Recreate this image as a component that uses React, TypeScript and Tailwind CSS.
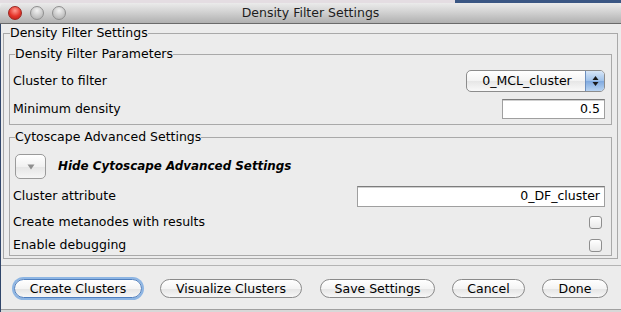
import type { FC, ReactNode } from "react";

const PillButton: FC<{ label: string; width: string; primary?: boolean }> = ({ label, width, primary }) => (
  <button
    className={`${width} h-[19px] rounded-full border text-[12.5px] leading-[17px] text-center text-black bg-[linear-gradient(#ffffff,#f4f4f4_50%,#e4e4e4_51%,#f7f7f7)] ${
      primary
        ? "border-[#4f7fbf] shadow-[0_0_0_2px_#8db5e3]"
        : "border-[#8a8a8a]"
    }`}
  >
    {label}
  </button>
);

const Checkbox: FC = () => (
  <span className="block w-[13px] h-[13px] rounded-[3px] border border-[#8e8e8e] bg-[linear-gradient(#ffffff,#e9e9e9)]" />
);

const TextBox: FC<{ value: string; width: string; height: string }> = ({ value, width, height }) => (
  <div
    className={`${width} ${height} bg-white border border-[#9f9f9f] border-t-[#7c7c7c] shadow-[inset_0_1px_0_#d0d0d0] text-right pr-[4px] flex items-center justify-end`}
  >
    {value}
  </div>
);

const Group: FC<{ title: string; className?: string; children: ReactNode }> = ({ title, className, children }) => (
  <fieldset className={`border border-[#a9a9a9] ${className ?? ""}`}>
    <legend className="leading-[16px] ml-[2px]">{title}</legend>
    {children}
  </fieldset>
);

export default function App() {
  return (
    <div className="w-[621px] h-[312px] overflow-hidden flex flex-col bg-[#ececec] text-[12.5px] text-black font-['DejaVu_Sans',sans-serif]">
      {/* desktop strip behind the window */}
      <div className="h-[3px] flex shrink-0">
        <div className="flex-1 bg-[#e4dde2]" />
        <div className="w-[166px] bg-[#3a5683]" />
      </div>

      {/* Title bar */}
      <div className="h-[21px] shrink-0 rounded-t-[5px] border-b border-[#6a6a6a] bg-[linear-gradient(#ebebeb,#d2d2d2_45%,#b0b0b0)] grid grid-cols-[1fr_auto_1fr] items-center">
        <div className="flex items-center gap-[8px] pl-[8px]">
          <span className="w-[14px] h-[14px] rounded-full border border-[#9a2620] bg-[radial-gradient(circle_at_50%_30%,#ff9b90,#e5342a_55%,#b51e16)]" />
          <span className="w-[14px] h-[14px] rounded-full border border-[#8f8f8f] bg-[radial-gradient(circle_at_50%_30%,#f2f2f2,#c9c9c9_55%,#a9a9a9)]" />
          <span className="w-[14px] h-[14px] rounded-full border border-[#8f8f8f] bg-[radial-gradient(circle_at_50%_30%,#f2f2f2,#c9c9c9_55%,#a9a9a9)]" />
        </div>
        <div className="text-[12.5px] text-[#1d1d1d] leading-[16px]">Density Filter Settings</div>
        <div />
      </div>

      {/* Body */}
      <div className="flex-1 flex flex-col border-l border-[#31466a]">
        <div className="pl-[2px] pr-[3px] pt-[1px] pb-[6px] border-b border-[#b4b4b4]">
          <fieldset className="border border-[#a9a9a9] pl-[5px] pr-[5px] pb-[2px]">
            <legend className="leading-[16px] ml-[1px]">Density Filter Settings</legend>

            {/* Density Filter Parameters */}
            <Group title="Density Filter Parameters" className="mt-[5px] pl-[3px] pr-[6px] pb-[5px]">
              <div className="mt-[8px] h-[22px] flex items-center justify-between">
                <span>Cluster to filter</span>
                <div className="w-[139px] h-[22px] rounded-[5px] border border-[#8c8c8c] flex overflow-hidden bg-[linear-gradient(#ffffff,#f3f3f3_50%,#e6e6e6_51%,#f9f9f9)]">
                  <span className="flex-1 flex items-center justify-center pl-[2px]">0_MCL_cluster</span>
                  <span className="w-[19px] border-l border-[#6d8fbf] flex items-center justify-center bg-[linear-gradient(#d7e6f7,#9ec1ea_50%,#7fa9df_51%,#b9d4f2)]">
                    <svg width="7" height="12" viewBox="0 0 7 12">
                      <path d="M3.5 1 L6.5 5 L0.5 5 Z" fill="#1a1a1a" />
                      <path d="M3.5 11 L6.5 7 L0.5 7 Z" fill="#1a1a1a" />
                    </svg>
                  </span>
                </div>
              </div>
              <div className="mt-[7px] h-[20px] flex items-center justify-between">
                <span>Minimum density</span>
                <TextBox value="0.5" width="w-[103px]" height="h-[20px]" />
              </div>
            </Group>

            {/* Cytoscape Advanced Settings */}
            <Group title="Cytoscape Advanced Settings" className="mt-[4px] pl-[3px] pr-[6px] pb-0">
              <div className="mt-[9px] h-[25px] flex items-center">
                <button className="ml-[2px] w-[31px] h-[25px] rounded-[5px] border border-[#9a9a9a] bg-[linear-gradient(#ffffff,#f1f1f1_50%,#e5e5e5_51%,#f6f6f6)] flex items-center justify-center">
                  <svg width="8" height="6" viewBox="0 0 8 6">
                    <path d="M0.5 0.5 L7.5 0.5 L4 5.5 Z" fill="#8f8f8f" />
                  </svg>
                </button>
                <span className="ml-[12px] font-bold italic text-[11.9px]">Hide Cytoscape Advanced Settings</span>
              </div>
              <div className="mt-[7px] h-[21px] flex items-center justify-between">
                <span>Cluster attribute</span>
                <TextBox value="0_DF_cluster" width="w-[248px]" height="h-[21px]" />
              </div>
              <div className="mt-[5px] h-[20px] flex items-center justify-between">
                <span>Create metanodes with results</span>
                <span className="mr-[3px]">
                  <Checkbox />
                </span>
              </div>
              <div className="mt-[3px] h-[20px] flex items-center justify-between">
                <span>Enable debugging</span>
                <span className="mr-[3px]">
                  <Checkbox />
                </span>
              </div>
            </Group>
          </fieldset>
        </div>

        {/* Button bar */}
        <div className="flex-1 flex items-start pt-[13px] pl-[13px] border-b border-[#a0a0a0]">
          <PillButton label="Create Clusters" width="w-[128px]" primary />
          <span className="w-[18px]" />
          <PillButton label="Visualize Clusters" width="w-[142px]" />
          <span className="w-[18px]" />
          <PillButton label="Save Settings" width="w-[115px]" />
          <span className="w-[17px]" />
          <PillButton label="Cancel" width="w-[73px]" />
          <span className="w-[17px]" />
          <PillButton label="Done" width="w-[66px]" />
        </div>
        <div className="h-[2px] bg-[#d8d8d8]" />
      </div>
    </div>
  );
}
